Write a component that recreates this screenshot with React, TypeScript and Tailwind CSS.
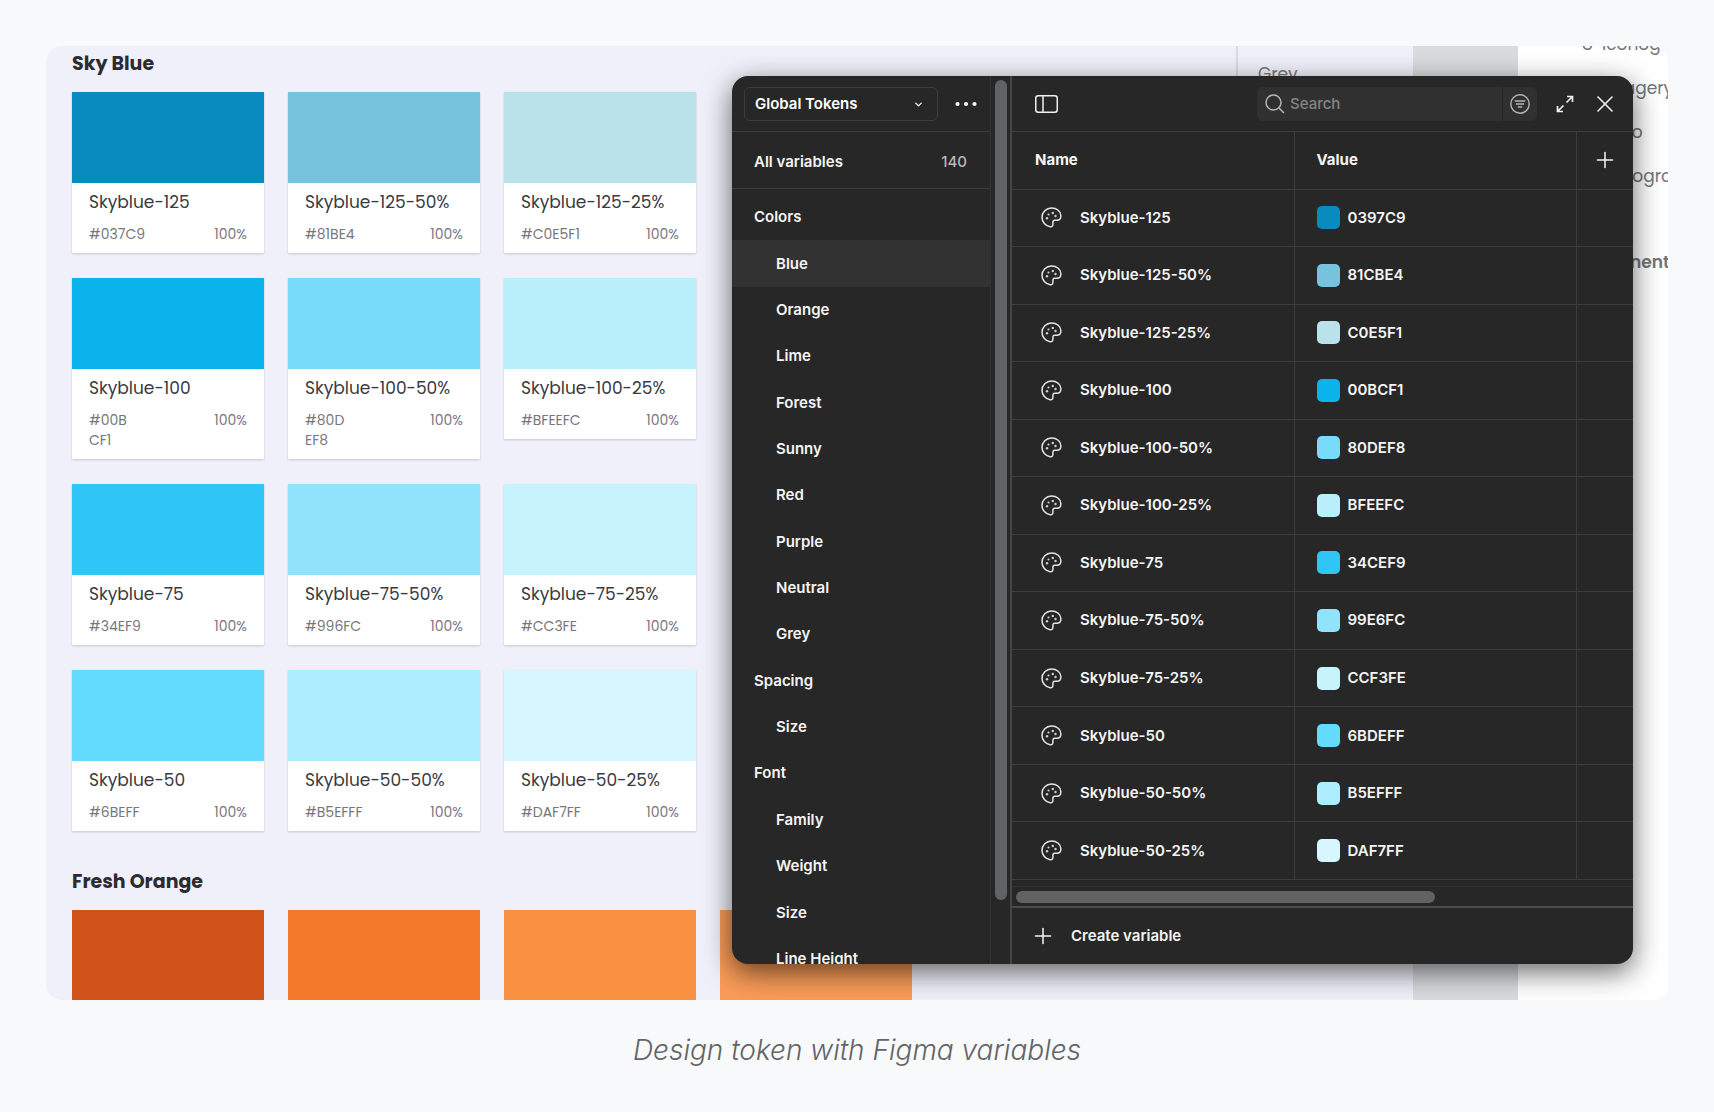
import React from 'react';
import { ChevronDown, Plus, X } from 'lucide-react';

type Token = {
    name: string;
    label: string;
    value: string;
    color: string;
};

const tokens: Token[] = [
    { name: 'Skyblue-125', label: '#037C9', value: '0397C9', color: 'bg-[#0a8bc0]' },
    { name: 'Skyblue-125-50%', label: '#81BE4', value: '81CBE4', color: 'bg-[#77c3dd]' },
    { name: 'Skyblue-125-25%', label: '#C0E5F1', value: 'C0E5F1', color: 'bg-[#b9e2ea]' },
    { name: 'Skyblue-100', label: '#00B CF1', value: '00BCF1', color: 'bg-[#0ab3ec]' },
    { name: 'Skyblue-100-50%', label: '#80D EF8', value: '80DEF8', color: 'bg-[#77dbf9]' },
    { name: 'Skyblue-100-25%', label: '#BFEEFC', value: 'BFEEFC', color: 'bg-[#b9eefb]' },
    { name: 'Skyblue-75', label: '#34EF9', value: '34CEF9', color: 'bg-[#2fc6f7]' },
    { name: 'Skyblue-75-50%', label: '#996FC', value: '99E6FC', color: 'bg-[#91e3fb]' },
    { name: 'Skyblue-75-25%', label: '#CC3FE', value: 'CCF3FE', color: 'bg-[#c6f3fc]' },
    { name: 'Skyblue-50', label: '#6BEFF', value: '6BDEFF', color: 'bg-[#63dbff]' },
    { name: 'Skyblue-50-50%', label: '#B5EFFF', value: 'B5EFFF', color: 'bg-[#adedfe]' },
    { name: 'Skyblue-50-25%', label: '#DAF7FF', value: 'DAF7FF', color: 'bg-[#d6f7ff]' },
];

const oranges = ['bg-[#d2531a]', 'bg-[#f2782a]', 'bg-[#f98f41]', 'bg-[#f99c57]'];

const pages = ['Iconography', 'Imagery', 'Logo', 'Typography'];

const groups = [
    { title: 'Colors', items: ['Blue', 'Orange', 'Lime', 'Forest', 'Sunny', 'Red', 'Purple', 'Neutral', 'Grey'] },
    { title: 'Spacing', items: ['Size'] },
    { title: 'Font', items: ['Family', 'Weight', 'Size', 'Line Height'] },
];

const PaletteIcon = () => (
    <svg className="size-[21px] shrink-0" viewBox="0 0 21 21" fill="none" stroke="#e4e4e4" strokeWidth="1.5" aria-hidden="true">
        <path d="M10.5 1c5.300 0 9.400 3.500 9.400 7.700 0 3.200-1.600 4.600-4.200 4.600h-1.900c-1.400 0-1.900.9-1.900 2.200v1.700c0 1.800-1 2.800-2.800 2.500C4.500 19 1 15 1 10.400 1 5.200 5.200 1 10.500 1z" strokeLinejoin="round" />
        <g fill="#d0d0d0" stroke="none">
            <circle cx="6" cy="11.200" r="1.200" />
            <circle cx="7.500" cy="7.500" r="1.100" />
            <circle cx="11.800" cy="6" r="1.200" />
            <circle cx="14.500" cy="9" r="1.200" />
        </g>
    </svg>
);

const SwatchCard = ({ token }: { token: Token }) => (
    <div className="bg-white shadow-[0_1px_2px_rgba(0,0,0,0.18)]">
        <div className={`h-[91px] ${token.color}`}></div>
        <div className="px-[17px] pt-[7px] pb-[9px]">
            <p className="text-[17px] leading-6 text-[#3a3a3f] whitespace-nowrap">{token.name}</p>
            <div className="mt-[10px] flex justify-between text-[14px] leading-5 text-[#77777d]">
                <span className="w-12">{token.label}</span>
                <span>100%</span>
            </div>
        </div>
    </div>
);

const StyleGuide = () => (
    <div className="flex font-[Poppins,Inter,sans-serif]">
        <div className="flex-1 min-w-0 bg-[#f0f0fa] flex justify-between items-start">
            <div className="pl-[26px]">
                <h2 className="mb-[10px] text-[19px] leading-9 font-bold text-[#2c2c30]">Sky Blue</h2>
                <div className="grid grid-cols-[repeat(3,192px)] gap-x-6 gap-y-[25px] items-start">
                    {tokens.map((token) => (
                        <SwatchCard key={token.name} token={token} />
                    ))}
                </div>
                <h2 className="mt-[33px] mb-[10px] text-[19px] leading-9 font-bold text-[#2c2c30]">Fresh Orange</h2>
                <div className="grid grid-cols-[repeat(4,192px)] gap-x-6">
                    {oranges.map((color) => (
                        <div key={color} className={`h-[90px] ${color}`}></div>
                    ))}
                </div>
            </div>
            <div className="w-[177px] h-96 border-l-2 border-[#d9dadf] pl-5 pt-4">
                <p className="text-[17px] leading-6 text-[#77777d]">Grey</p>
            </div>
        </div>
        <div className="w-[105px] bg-[#d8dcdf]"></div>
        <div className="w-[150px] bg-white overflow-hidden text-[17px] leading-[44px] text-[#74747a] whitespace-nowrap">
            <ul className="-mt-6 pl-16">
                {pages.map((page) => (
                    <li key={page} className="flex">
                        <span className="w-5 shrink-0">o</span>
                        {page}
                    </li>
                ))}
            </ul>
            <p className="mt-[42px] pl-12 font-semibold">Components</p>
        </div>
    </div>
);

const Sidebar = () => (
    <div className="w-[259px] shrink-0 border-r border-[#333333] overflow-hidden">
        <div className="h-14 flex items-center border-b border-[#3d3d3d] pl-3 pr-[13px]">
            <div className="relative w-[194px]">
                <select
                    aria-label="Collection"
                    className="w-full h-[34px] appearance-none rounded-md border border-[#3d3d3d] bg-transparent pl-[10px] text-white"
                >
                    <option>Global Tokens</option>
                </select>
                <ChevronDown className="absolute right-[14px] top-3 size-[11px] pointer-events-none" strokeWidth={3} />
            </div>
            <button className="ml-auto" aria-label="More options">
                <svg className="w-[22px] h-5" viewBox="0 0 22 20" fill="currentColor">
                    <circle cx="2.500" cy="10" r="2.100" />
                    <circle cx="11" cy="10" r="2.100" />
                    <circle cx="19.500" cy="10" r="2.100" />
                </svg>
            </button>
        </div>
        <button className="w-full h-[57px] flex items-center justify-between border-b border-[#3d3d3d] pt-[3px] pl-[22px] pr-[23px]">
            <span>All variables</span>
            <span className="font-medium text-[#b8b8b8]">140</span>
        </button>
        {/* Row heights share the list's height, the last one runs past the window */}
        <div className="mt-[5px] h-[788px] flex flex-col">
            {groups.map((group) => (
                <React.Fragment key={group.title}>
                    <button className="flex-1 pl-[22px] text-left">{group.title}</button>
                    {group.items.map((item) => (
                        <button
                            key={item}
                            className={`flex-1 pl-11 text-left ${item === 'Blue' ? 'bg-[#323232]' : ''}`}
                        >
                            {item}
                        </button>
                    ))}
                </React.Fragment>
            ))}
        </div>
    </div>
);

const Toolbar = () => (
    <div className="h-14 shrink-0 flex items-center border-b border-[#3d3d3d] pl-[23px] pr-[14px]">
        <button aria-label="Toggle sidebar">
            <svg className="w-[23px] h-[18px]" viewBox="0 0 23 18" fill="none" stroke="#f0f0f0" strokeWidth="1.500">
                <rect x="0.750" y="0.750" width="21.500" height="16.500" rx="2.500" />
                <path d="M8 1v16" />
            </svg>
        </button>
        <div className="ml-auto flex h-[34px] rounded-md bg-[#303030]">
            <label className="flex items-center w-[246px] pl-2 border-r border-[#262626]">
                <svg className="size-5 shrink-0" viewBox="0 0 20 20" fill="none" stroke="#b5b5b5" strokeWidth="1.500" aria-hidden="true">
                    <circle cx="8.500" cy="8.500" r="7.500" />
                    <path d="M14 14l5 5" />
                </svg>
                <input
                    type="search"
                    aria-label="Search"
                    placeholder="Search"
                    className="ml-[5px] w-full min-w-0 bg-transparent outline-none font-medium placeholder:text-[#868686]"
                />
            </label>
            <button className="w-[34px] flex items-center justify-center" aria-label="Filter">
                <svg className="size-5" viewBox="0 0 20 20" fill="none" stroke="#b5b5b5" strokeWidth="1.400">
                    <circle cx="10" cy="10" r="9.200" />
                    <path d="M4.700 7h10.600M6 10h8M7.800 13h4.400" />
                </svg>
            </button>
        </div>
        <button className="ml-[19px]" aria-label="Expand">
            <svg className="size-[18px]" viewBox="0 0 18 18" fill="none" stroke="#f0f0f0" strokeWidth="1.700">
                <path d="M11 1.500h5.500V7M16.500 1.500l-6 6M7 16.500H1.500V11M1.500 16.500l6-6" />
            </svg>
        </button>
        <button className="ml-[17px]" aria-label="Close">
            <X className="size-7 text-[#f0f0f0]" strokeWidth={1.4} />
        </button>
    </div>
);

const VariablesTable = () => (
    <table className="w-full h-[748px] table-fixed border-collapse text-left">
        <thead>
            <tr className="h-[57px] border-b border-[#3d3d3d]">
                <th className="pl-[23px] font-bold">Name</th>
                <th className="pl-[22px] font-bold border-l border-[#3d3d3d]">Value</th>
                <th className="w-[57px] border-l border-[#3d3d3d]">
                    <button className="flex w-full justify-center" aria-label="Add mode">
                        <Plus className="size-[26px]" strokeWidth={1.4} />
                    </button>
                </th>
            </tr>
        </thead>
        <tbody>
            {tokens.map((token) => (
                <tr key={token.name} className="border-b border-[#3d3d3d]">
                    <td className="pl-[29px]">
                        <div className="flex items-center gap-[18px]">
                            <PaletteIcon />
                            {token.name}
                        </div>
                    </td>
                    <td className="pl-[22px] border-l border-[#3d3d3d]">
                        <div className="flex items-center gap-2">
                            <span className={`size-[23px] rounded-[5px] ${token.color}`}></span>
                            {token.value}
                        </div>
                    </td>
                    <td className="border-l border-[#3d3d3d]"></td>
                </tr>
            ))}
        </tbody>
    </table>
);

const VariablesWindow = () => (
    <div className="absolute right-[35px] top-[30px] w-[901px] h-[888px] flex overflow-hidden rounded-2xl bg-[#272727] text-[#f5f5f5] font-[Inter,sans-serif] font-semibold text-[15px] leading-5 shadow-[0_8px_28px_rgba(0,0,0,0.6)]">
        <Sidebar />
        <div className="w-[19px] shrink-0 pl-1 pr-[3px] pt-1">
            <div className="h-[820px] rounded-full bg-[#606263]"></div>
        </div>
        <div className="flex-1 min-w-0 flex flex-col border-l-2 border-[#454545]">
            <Toolbar />
            <VariablesTable />
            <div className="h-[22px] mt-[6px] border-t border-t-[#333333] border-b-2 border-b-[#4a4a4a] pt-1 pl-1">
                <div className="h-3 w-[419px] rounded-full bg-[#606263]"></div>
            </div>
            <button className="flex-1 flex items-center gap-[15px] pl-[18px] text-left">
                <Plus className="size-[26px]" strokeWidth={1.4} />
                Create variable
            </button>
        </div>
    </div>
);

const App = () => {
    return (
        <main className="min-h-screen bg-[#f7f9fb] p-[46px]">
            <figure>
                <div className="relative overflow-hidden rounded-2xl">
                    <StyleGuide />
                    <VariablesWindow />
                </div>
                <figcaption className="mt-8 text-center font-[Inter,sans-serif] font-light italic text-[28px] leading-9 text-[#626466]">
                    Design token with Figma variables
                </figcaption>
            </figure>
        </main>
    );
};

export default App;
